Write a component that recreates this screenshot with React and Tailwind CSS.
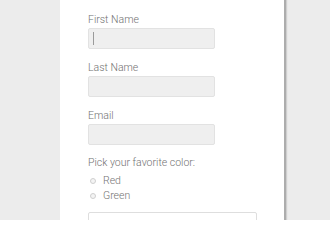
const fields = ["First Name", "Last Name", "Email"];

const App = () => {
    return (
        <div className="h-[220px] overflow-hidden bg-[#ececec] font-['Roboto',sans-serif] font-light text-[#727272]">
            <div className="ml-[60px] w-[226px] h-[220px] bg-white border-r-2 border-[#adadad] shadow-[1px_0_1px_#cfcfcf] pl-[28px] pt-[13px]">
                {fields.map((label, i) => (
                    <div key={label} className={i < 2 ? "mb-[12px]" : "mb-[11px]"}>
                        <div className="text-[10.5px] leading-[14px]">{label}</div>
                        <div className="relative mt-[1px] w-[127px] h-[21px] bg-[#efefef] border border-[#e2e2e2] rounded-[2px]">
                            {i === 0 && (
                                <span className="absolute left-[4px] top-[3px] w-px h-[13px] bg-[#9a9a9a]" />
                            )}
                        </div>
                    </div>
                ))}

                <div className="text-[10.5px] leading-[14px]">Pick your favorite color:</div>
                <div className="mt-[3px]">
                    {["Red", "Green"].map((c) => (
                        <div key={c} className="flex items-center h-[15px] text-[10.5px]">
                            <span className="ml-[2px] w-[6px] h-[6px] rounded-full border border-[#cfcfcf] bg-[#f4f4f4]" />
                            <span className="ml-[7px]">{c}</span>
                        </div>
                    ))}
                </div>

                <div className="mt-[9px] w-[169px] h-[30px] border border-[#dedede] rounded-[2px] bg-white" />
            </div>
        </div>
    );
};

export default App;
